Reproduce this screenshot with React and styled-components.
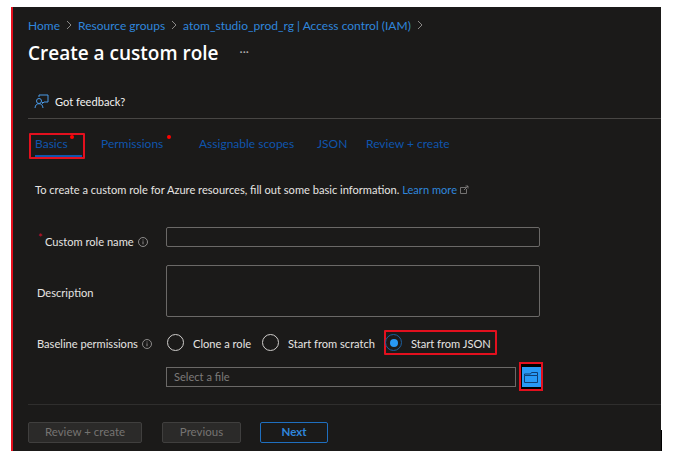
import React from "react";
import styled, { createGlobalStyle } from "styled-components";

const Global = createGlobalStyle`
  html, body { margin: 0; padding: 0; background: #fff; }
  body { font-family: Lato, "Open Sans", sans-serif; }
`;

const Panel = styled.main`
  position: relative;
  box-sizing: border-box;
  width: 650px;
  height: 444px;
  margin: 7px 0 0 11px;
  padding: 0 0 0 15px;
  background: #1b1a19;
  border-left: 2px solid #e3101e;
  font-size: 11.1px;
  color: #e6e4e2;
  &::after {
    content: "";
    position: absolute;
    right: -1px;
    bottom: 0;
    width: 1px;
    height: 21px;
    background: #000;
  }
`;

const Breadcrumbs = styled.nav`
  display: flex;
  align-items: center;
  height: 18px;
  padding-top: 9px;
  font-size: 12px;
  color: #2f86dc;
  white-space: nowrap;
`;

const Chevron = styled.svg`
  width: 6px;
  height: 10px;
  margin: 0 6px;
  fill: none;
  stroke: #8a8886;
`;

const TitleRow = styled.header`
  display: flex;
  align-items: center;
  height: 38px;
`;

const Title = styled.h1`
  margin: 0;
  font-family: "Open Sans", sans-serif;
  font-size: 19px;
  font-weight: 600;
  color: #fff;
`;

const More = styled.span`
  margin-left: 21px;
  font-size: 12px;
  color: #b0aeac;
  transform: translateY(-2px);
`;

const FeedbackBar = styled.div`
  display: flex;
  align-items: center;
  gap: 6px;
  height: 34px;
  margin-top: 13px;
  padding-left: 6px;
  box-sizing: border-box;
  border-bottom: 1px solid #484644;
  font-size: 11.1px;
  color: #f3f2f1;
`;

const Tabs = styled.div`
  display: flex;
  align-items: flex-start;
  height: 27px;
  margin-top: 14px;
  font-size: 12px;
  color: #0f55ad;
`;

const Tab = styled.div`
  position: relative;
  box-sizing: border-box;
  width: ${p => p.$w}px;
  height: 26px;
  line-height: 22px;
  white-space: nowrap;
  ${p => p.$active && `
    margin: 0 16px 0 1px;
    padding-left: 4px;
    border: 2px solid #e3101e;
    border-radius: 1px;
    line-height: 18px;
    &::after {
      content: "";
      position: absolute;
      left: 4px;
      right: 1px;
      bottom: 0;
      height: 2px;
      background: #0f55ad;
    }
  `}
`;

const Dot = styled.i`
  position: absolute;
  top: ${p => p.$top}px;
  right: ${p => p.$right}px;
  width: 4px;
  height: 4px;
  border-radius: 50%;
  background: #f00;
`;

const Intro = styled.p`
  margin: 22px 0 0 7px;
  height: 16px;
  line-height: 16px;
  font-size: 11.1px;
  white-space: nowrap;
`;

const Link = styled.a`
  color: #2f86dc;
`;

const Row = styled.div`
  display: flex;
  align-items: ${p => p.$align || "center"};
  margin-top: ${p => p.$mt}px;
  padding-left: 9px;
`;

const Label = styled.label`
  position: relative;
  box-sizing: border-box;
  display: flex;
  align-items: center;
  gap: 4px;
  width: 129px;
  flex: none;
  padding-left: ${p => p.$indent || 0}px;
  padding-top: ${p => p.$top || 0}px;
  font-size: 11.1px;
  white-space: nowrap;
`;

const Req = styled.span`
  position: absolute;
  left: 1px;
  top: 6px;
  color: #c8102e;
  font-size: 11px;
  line-height: 10px;
`;

const Field = styled.div`
  box-sizing: border-box;
  width: ${p => p.$w}px;
  height: ${p => p.$h}px;
  flex: none;
  border: 1px solid #6b6967;
  border-radius: 2px;
`;

const FileField = styled(Field)`
  padding-left: 7px;
  line-height: 18px;
  font-size: 11.1px;
  color: #7d7b79;
  border-radius: 0;
`;

const Radio = styled.span`
  box-sizing: border-box;
  width: 17px;
  height: 17px;
  flex: none;
  margin-left: ${p => p.$ml || 0}px;
  border-radius: 50%;
  border: 1px solid ${p => (p.$on ? "#1c5f9f" : "#d0cecc")};
  display: flex;
  align-items: center;
  justify-content: center;
  &::after {
    content: "";
    display: ${p => (p.$on ? "block" : "none")};
    width: 8px;
    height: 8px;
    border-radius: 50%;
    background: #2899f5;
  }
`;

const RadioText = styled.span`
  box-sizing: border-box;
  width: ${p => p.$w}px;
  padding: 2px 0 0 9px;
  font-size: 11.1px;
  white-space: nowrap;
`;

const JsonOption = styled.div`
  display: flex;
  align-items: center;
  box-sizing: border-box;
  width: 113px;
  height: 25px;
  border: 2px solid #e3101e;
  border-radius: 1px;
`;

const FolderOutline = styled.div`
  display: flex;
  align-items: flex-start;
  justify-content: center;
  box-sizing: border-box;
  width: 24px;
  height: 29px;
  margin: -5px 0 0 3px;
  border: 2px solid #e3101e;
  background: #000;
`;

const FolderButton = styled.button`
  display: flex;
  align-items: center;
  justify-content: center;
  width: 19px;
  height: 20px;
  padding: 0;
  border: 0;
  margin-top: 3px;
  background: #2899f5;
`;

const Footer = styled.footer`
  display: flex;
  align-items: flex-start;
  box-sizing: border-box;
  height: 47px;
  margin-top: 13px;
  padding-top: 17px;
  border-top: 1px solid #2f2e2d;
`;

const Btn = styled.button`
  box-sizing: border-box;
  width: ${p => p.$w}px;
  height: 21px;
  margin-right: ${p => p.$gap}px;
  padding: 0 0 2px;
  border-radius: 2px;
  font-family: inherit;
  font-size: 11.5px;
  font-weight: ${p => (p.$primary ? 700 : 400)};
  color: ${p => (p.$primary ? "#2f86dc" : "#767472")};
  background: ${p => (p.$primary ? "#1b1a19" : "#2b2a29")};
  border: 1px solid ${p => (p.$primary ? "#1f6fbf" : "#403f3e")};
`;

const Sep = () => (
  <Chevron viewBox="0 0 6 10"><path d="M1 1l4 4-4 4" /></Chevron>
);

const InfoIcon = () => (
  <svg width="10" height="10" viewBox="0 0 10 10" fill="none" stroke="#a8a6a4" strokeWidth=".8">
    <circle cx="5" cy="5" r="4.500" />
    <path d="M5 4.300v3M5 2.500v1" />
  </svg>
);

export default function App() {
  return (
    <Panel>
      <Global />
      <Breadcrumbs>
        Home<Sep />Resource groups<Sep />atom_studio_prod_rg | Access control (IAM)<Sep />
      </Breadcrumbs>
      <TitleRow>
        <Title>Create a custom role</Title>
        <More>···</More>
      </TitleRow>
      <FeedbackBar>
        <svg width="15" height="15" viewBox="0 0 15 15" fill="none" stroke="#4a9ae8" strokeWidth="1">
          <path d="M5 3V1h9v7h-4l-1.500 1.500V8" />
          <circle cx="5" cy="7" r="2.500" />
          <path d="M1 14c.3-3 1.800-4.300 4-4.300S8.700 11 9 14" />
        </svg>
        Got feedback?
      </FeedbackBar>
      <Tabs>
        <Tab $active $w={56}>Basics<Dot $top={0} $right={9} /></Tab>
        <Tab $w={98}>Permissions<Dot $top={2} $right={28} /></Tab>
        <Tab $w={118}>Assignable scopes</Tab>
        <Tab $w={49}>JSON</Tab>
        <Tab $w={90}>Review + create</Tab>
      </Tabs>
      <Intro>
        To create a custom role for Azure resources, fill out some basic information. <Link>Learn more</Link>{" "}
        <svg width="9" height="9" viewBox="0 0 9 9" fill="none" stroke="#8a8886" strokeWidth=".8">
          <path d="M6 2.500H.5v6h6V4M4 5l4-4M5.500 1H8v2.500" />
        </svg>
      </Intro>
      <Row $mt={29} $align="flex-start">
        <Label $indent={8} $top={8}>
          <Req>*</Req>Custom role name <InfoIcon />
        </Label>
        <Field $w={374} $h={20} />
      </Row>
      <Row $mt={17}>
        <Label $top={2}>Description</Label>
        <Field $w={374} $h={52} />
      </Row>
      <Row $mt={13}>
        <Label $top={2}>Baseline permissions <InfoIcon /></Label>
        <Radio $ml={1} />
        <RadioText $w={78}>Clone a role</RadioText>
        <Radio />
        <RadioText $w={105}>Start from scratch</RadioText>
        <JsonOption>
          <Radio $on $ml={-1} />
          <RadioText $w={90}>Start from JSON</RadioText>
        </JsonOption>
      </Row>
      <Row $mt={12} $align="flex-start">
        <Label />
        <FileField $w={350} $h={20}>Select a file</FileField>
        <FolderOutline>
          <FolderButton aria-label="Browse">
            <svg width="14" height="11" viewBox="0 0 14 11" fill="none" stroke="#0f3f73" strokeWidth="1">
              <path d="M.5 3.500h13v7H.5zM.5 3.500V2h6l1-1.500h6v3" />
            </svg>
          </FolderButton>
        </FolderOutline>
      </Row>
      <Footer>
        <Btn $w={114} $gap={20}>Review + create</Btn>
        <Btn $w={79} $gap={19}>Previous</Btn>
        <Btn $w={68} $gap={0} $primary>Next</Btn>
      </Footer>
    </Panel>
  );
}
